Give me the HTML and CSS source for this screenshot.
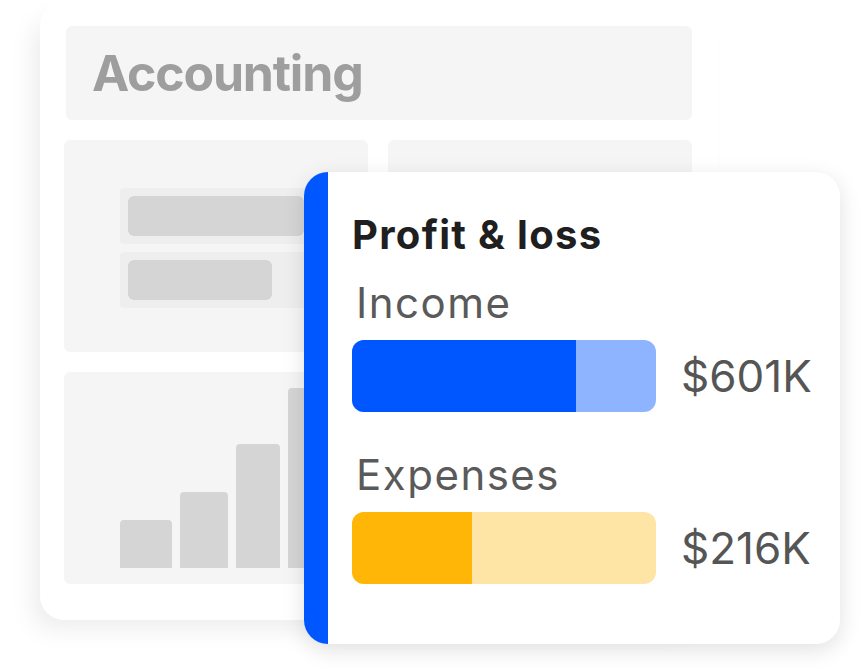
FILE: index.html
```html
<!DOCTYPE html>
<html lang="en">
<head>
<meta charset="utf-8">
<title>Accounting - Profit &amp; loss</title>
<link rel="stylesheet" href="styles.css">
</head>
<body>
<div class="stage">
  <div class="back-card">
    <div class="header"><span class="header-title">Accounting</span></div>
    <div class="panels">
      <div class="panel panel-list">
        <div class="list-row"><div class="pill pill-long"></div></div>
        <div class="list-row"><div class="pill pill-short"></div></div>
      </div>
      <div class="panel"></div>
      <div class="panel panel-chart">
        <div class="chart-bar" style="width:52px;height:48px"></div>
        <div class="chart-bar" style="width:48px;height:76px"></div>
        <div class="chart-bar" style="width:44px;height:124px"></div>
        <div class="chart-bar" style="width:44px;height:180px"></div>
      </div>
    </div>
  </div>

  <div class="pl-card">
    <h2 class="pl-title">Profit &amp; loss</h2>
    <div class="metric metric-income">
      <div class="metric-label">Income</div>
      <div class="metric-row">
        <div class="meter meter-income"><div class="meter-fill" style="width:224px"></div></div>
        <div class="metric-value">$601K</div>
      </div>
    </div>
    <div class="metric metric-expenses">
      <div class="metric-label">Expenses</div>
      <div class="metric-row">
        <div class="meter meter-expenses"><div class="meter-fill" style="width:120px"></div></div>
        <div class="metric-value">$216K</div>
      </div>
    </div>
  </div>
</div>
</body>
</html>
```
FILE: styles.css
```css
* { box-sizing: border-box; }
html, body {
  margin: 0;
  padding: 0;
  background: #ffffff;
}
body {
  width: 864px;
  height: 668px;
  overflow: hidden;
  font-family: "Inter", "Noto Sans", sans-serif;
}
.stage {
  position: relative;
  width: 864px;
  height: 668px;
  padding-top: 2px;
  padding-left: 40px;
}
.back-card {
  width: 678px;
  height: 618px;
  background: #ffffff;
  border-radius: 24px;
  box-shadow: -12px 14px 26px -6px rgba(0, 0, 0, 0.08);
  padding: 24px 26px 0 24px;
  display: flex;
  flex-direction: column;
  gap: 20px;
}
.header {
  height: 94px;
  margin-left: 2px;
  background: #f5f5f5;
  border-radius: 6px;
  display: flex;
  align-items: center;
  padding-left: 26px;
}
.header-title {
  font-size: 50px;
  font-weight: 700;
  color: #9e9e9e;
  line-height: 1;
  letter-spacing: -1.2px;
}
.panels {
  display: grid;
  grid-template-columns: 304px 304px;
  grid-template-rows: 212px 212px;
  gap: 20px;
}
.panel {
  background: #f5f5f5;
  border-radius: 6px;
}
.panel-list {
  padding: 48px 0 0 56px;
  display: flex;
  flex-direction: column;
  gap: 8px;
}
.list-row {
  width: 240px;
  height: 56px;
  background: #eeeeee;
  border-radius: 4px;
  padding: 8px;
}
.pill {
  height: 40px;
  background: #d5d5d5;
  border-radius: 6px;
}
.pill-long { width: 176px; }
.pill-short { width: 144px; }
.panel-chart {
  grid-column: 1 / 3;
  display: flex;
  align-items: flex-end;
  gap: 8px;
  padding: 0 0 16px 56px;
}
.chart-bar {
  background: #d5d5d5;
  border-radius: 4px 4px 0 0;
}

.pl-card {
  position: absolute;
  left: 304px;
  top: 172px;
  width: 536px;
  height: 472px;
  background: #ffffff;
  border-left: 24px solid #0057ff;
  border-radius: 24px;
  box-shadow: 0 6px 22px rgba(0, 0, 0, 0.12);
  padding: 43px 0 0 24px;
  display: flex;
  flex-direction: column;
}
.pl-title {
  margin: 0;
  font-size: 40px;
  font-weight: 700;
  color: #1f1f1f;
  line-height: 1;
  letter-spacing: 1.3px;
}
.metric {
  display: flex;
  flex-direction: column;
  gap: 16px;
}
.metric-income { margin-top: 27px; }
.metric-expenses { margin-top: 42px; }
.metric-label {
  font-size: 42px;
  color: #5a5a5a;
  line-height: 1;
  letter-spacing: 1.5px;
  padding-left: 4px;
}
.metric-row {
  display: flex;
  align-items: center;
  gap: 25px;
}
.meter {
  width: 304px;
  height: 72px;
  border-radius: 12px;
  overflow: hidden;
  display: flex;
}
.meter-fill { height: 100%; }
.meter-income { background: #8fb4ff; }
.meter-income .meter-fill { background: #0057ff; }
.meter-expenses { background: #fee5a6; }
.meter-expenses .meter-fill { background: #ffb606; }
.metric-value {
  font-size: 44px;
  color: #555555;
  line-height: 1;
}
```
